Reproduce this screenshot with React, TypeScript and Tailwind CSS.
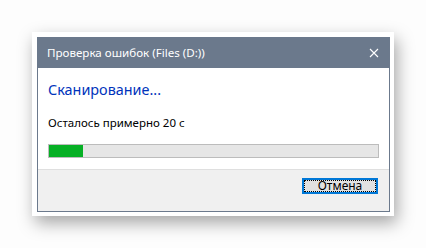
export default function App() {
  return (
    <div
      className="w-[426px] h-[248px] bg-[#fdfdfd] pt-[32px] pl-[32px]"
      style={{ fontFamily: '"Noto Sans", "Segoe UI", sans-serif' }}
    >
      <div className="w-[362px] h-[184px] bg-white pt-[5px] pl-[5px] shadow-[3px_7px_16px_rgba(0,0,0,0.35)]">
        <div className="w-[353px] h-[175px] border border-[#6b798c] flex flex-col">
          <div className="h-[30px] bg-[#6b798c] flex items-center justify-between pl-[9px] pr-[10px] shrink-0">
            <span className="text-white text-[11.6px] leading-none">Проверка ошибок (Files (D:))</span>
            <svg width="10" height="10" viewBox="0 0 10 10" className="text-white">
              <path d="M1 1L9 9M9 1L1 9" stroke="currentColor" strokeWidth="1.1" />
            </svg>
          </div>
          <div className="h-[101px] bg-white px-[10px] pt-[12px] shrink-0">
            <div className="text-[14.4px] leading-[20px] text-[#0033bb]">Сканирование...</div>
            <div className="mt-[15px] text-[11.5px] leading-[16px] text-black">Осталось примерно 20 с</div>
            <div className="mt-[13px] h-[14px] border border-[#bcbcbc] bg-[#e6e6e6]">
              <div className="h-full w-[34px] bg-[#06b025]" />
            </div>
          </div>
          <div className="h-px bg-[#dfdfdf] shrink-0" />
          <div className="flex-1 bg-[#f0f0f0] flex justify-end items-start pt-[8px] pr-[11px]">
            <button className="w-[76px] h-[16px] border-2 border-[#0078d7] bg-[#e1e1e1] p-0 flex">
              <span className="flex-1 border border-dotted border-black flex items-center justify-center text-[12px] leading-none text-black">
                Отмена
              </span>
            </button>
          </div>
        </div>
      </div>
    </div>
  );
}
